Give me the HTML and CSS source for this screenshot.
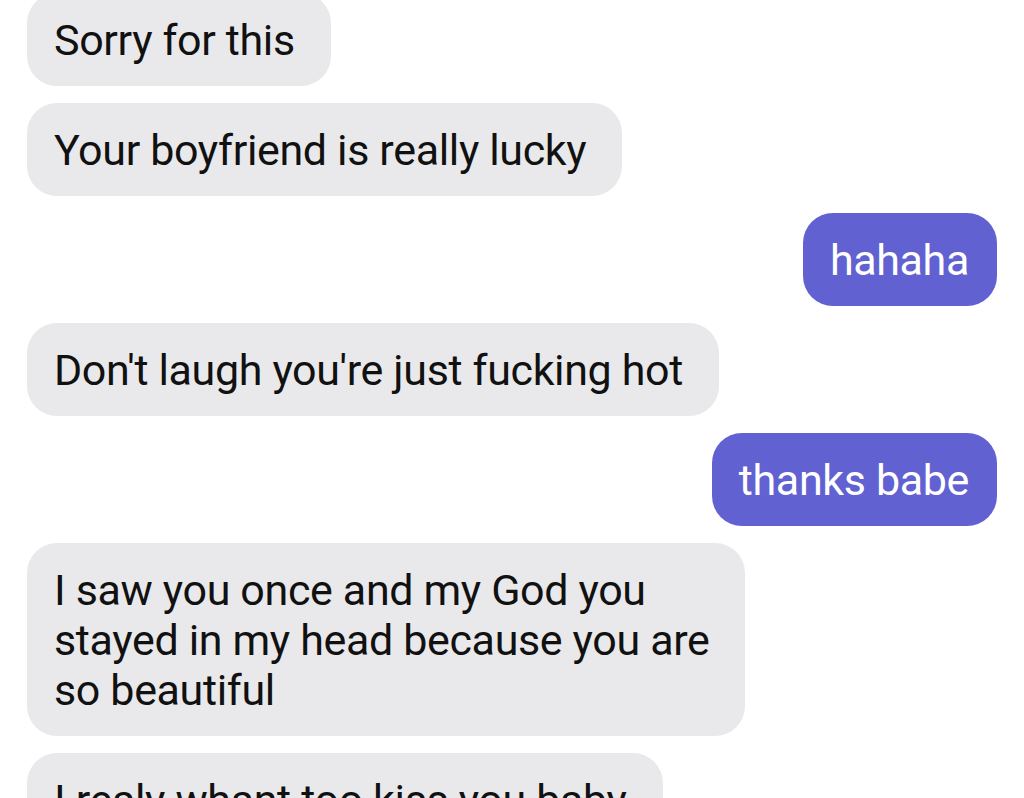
FILE: index.html
```html
<!DOCTYPE html>
<html lang="en">
  <head>
    <meta charset="UTF-8" />
    <meta name="viewport" content="width=device-width, initial-scale=1.0" />
    <title>Messages</title>
    <link rel="stylesheet" href="styles.css">
  </head>
  <body>
    <div class="thread">
      <div class="msg them">Sorry for this</div>
      <div class="msg them">Your boyfriend is really lucky</div>
      <div class="msg me">hahaha</div>
      <div class="msg them">Don't laugh you're just fucking hot</div>
      <div class="msg me">thanks babe</div>
      <div class="msg them">I saw you once and my God you<br />stayed in my head because you are<br />so beautiful</div>
      <div class="msg them">I realy whant too kiss you baby</div>
    </div>
  </body>
</html>
```

FILE: styles.css
```css
/* Chat thread */
* {
  box-sizing: border-box;
}
html,
body {
  margin: 0;
  height: 100%;
  overflow: hidden;
  background-color: #fff;
}
body {
  font-family: Roboto, "Noto Sans", sans-serif;
  color: #111;
}
.thread {
  display: flex;
  flex-direction: column;
  gap: 17px;
  margin-top: -7px;
  padding: 0 27px;
}
.msg {
  max-width: 740px;
  padding: 21.5px 36px 21.5px 27px;
  border-radius: 30px;
  font-size: 43px;
  line-height: 50px;
  letter-spacing: -0.35px;
  white-space: nowrap;
}
.them {
  align-self: flex-start;
  background-color: #e9e9eb;
  color: #111;
}
.me {
  align-self: flex-end;
  padding-right: 28px;
  background-color: #6261d2;
  color: #fff;
}
```
